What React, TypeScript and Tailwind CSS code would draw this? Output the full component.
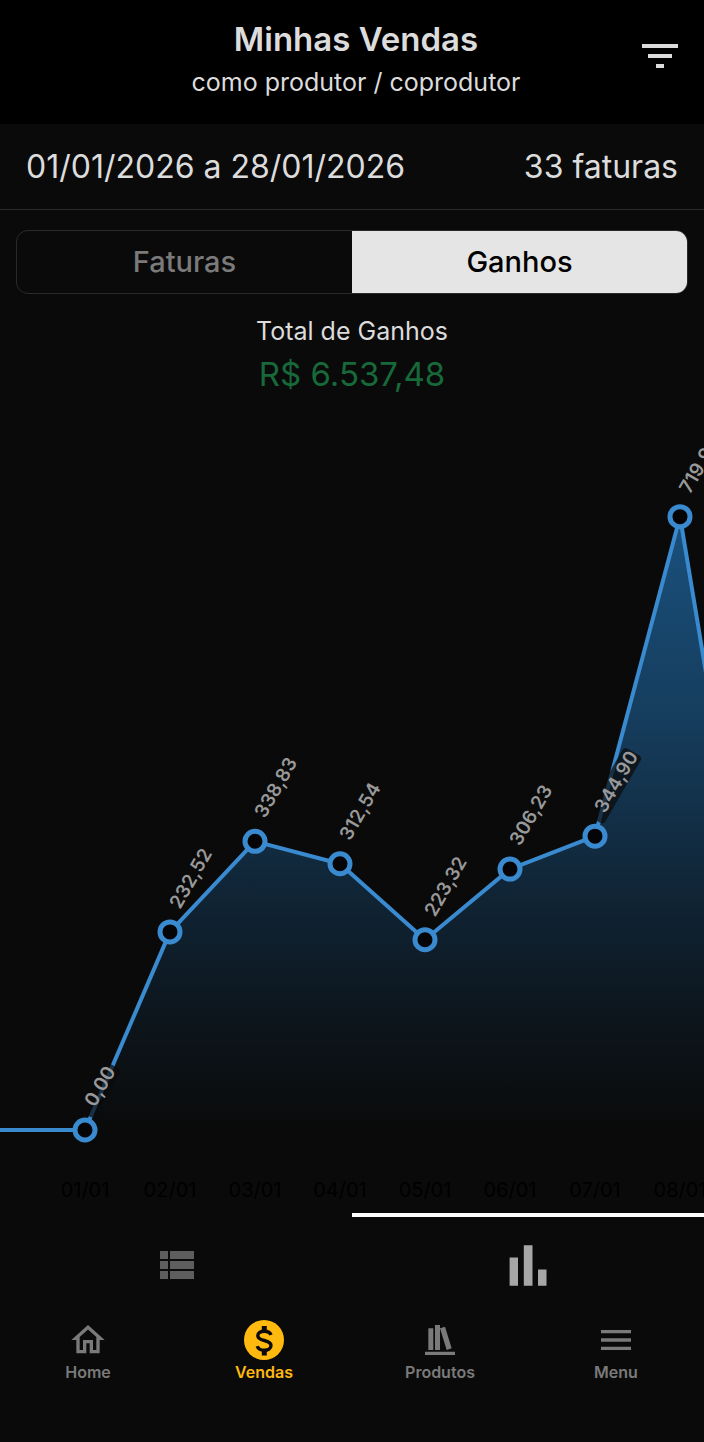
import { useState } from 'react';
import { MdFilterList, MdMenu } from 'react-icons/md';

interface Point {
  day: string;
  value: number;
}

const points: Point[] = [
  { day: '01/01', value: 0 },
  { day: '02/01', value: 232.52 },
  { day: '03/01', value: 338.83 },
  { day: '04/01', value: 312.54 },
  { day: '05/01', value: 223.32 },
  { day: '06/01', value: 306.23 },
  { day: '07/01', value: 344.9 },
  { day: '08/01', value: 719.9 },
  { day: '09/01', value: 120.4 },
];

const STEP = 85;
const BASE = 730;
const SCALE = 0.852;
const CHART_HEIGHT = 813;

const formatValue = (value: number) => value.toFixed(2).replace('.', ',');

function EarningsChart() {
  const coords = points.map((p, i) => ({ ...p, x: STEP * (i + 1), y: BASE - p.value * SCALE }));
  const width = STEP * (points.length + 1);
  const line = coords.map((c) => `L${c.x} ${c.y}`).join(' ');
  const lastX = coords[coords.length - 1].x;

  return (
    <div className="mt-1 overflow-x-auto overflow-y-hidden [scrollbar-width:none]">
      <svg width={width} height={CHART_HEIGHT} className="block max-w-none" role="img" aria-label="Ganhos por dia">
        <defs>
          <linearGradient id="area" x1="0" y1="117" x2="0" y2={BASE} gradientUnits="userSpaceOnUse">
            <stop offset="0" stopColor="#2688d8" stopOpacity="0.56" />
            <stop offset="0.35" stopColor="#2688d8" stopOpacity="0.39" />
            <stop offset="0.6" stopColor="#2688d8" stopOpacity="0.22" />
            <stop offset="0.8" stopColor="#2688d8" stopOpacity="0.1" />
            <stop offset="1" stopColor="#2688d8" stopOpacity="0" />
          </linearGradient>
        </defs>
        <path d={`M0 ${BASE} ${line} L${lastX} ${BASE} Z`} fill="url(#area)" />
        <path d={`M0 ${BASE} ${line}`} fill="none" stroke="#3a8ad0" strokeWidth="4" strokeLinejoin="round" />

        {coords.map((c) => {
          const label = formatValue(c.value);
          return (
            <g key={c.day}>
              <g transform={`translate(${c.x + 10} ${c.y - 22}) rotate(-60)`}>
                <rect x="-10" y="-17" width={label.length * 11 + 12} height="21" rx="4" fill="#0a0a0a" fillOpacity="0.7" />
                <text fontSize="19" fontWeight="600" fill="#999999">{label}</text>
              </g>
              <circle cx={c.x} cy={c.y} r="10" fill="#050507" stroke="#3a8ad0" strokeWidth="5" />
              <text x={c.x} y="797" fontSize="20" textAnchor="middle" fill="#000000">{c.day}</text>
            </g>
          );
        })}
      </svg>
    </div>
  );
}

function ListIcon() {
  return (
    <svg className="w-12 h-12" viewBox="0 0 24 24" fill="currentColor">
      <path d="M4 14h4v-4H4v4zm0 5h4v-4H4v4zM4 9h4V5H4v4zm5 5h12v-4H9v4zm0 5h12v-4H9v4zM9 5v4h12V5H9z" />
    </svg>
  );
}

function BarsIcon() {
  return (
    <svg className="w-12 h-12" viewBox="0 0 48 48" fill="currentColor">
      <path d="M5.6 16.5h8.4v28.2H5.6zM19.8 4.3h8.7v40.4h-8.7zM34 28.4h8.5v16.3H34z" />
    </svg>
  );
}

function HomeIcon() {
  return (
    <svg className="w-10 h-10" viewBox="0 0 24 24" fill="currentColor">
      <path d="M12 5.69l5 4.5V18h-2v-6H9v6H7v-7.81l5-4.5M12 3L2 12h3v8h6v-6h2v6h6v-8h3" />
    </svg>
  );
}

function MoneyIcon() {
  return (
    <svg className="w-10 h-10" viewBox="0 0 40 40" fill="none">
      <circle cx="20" cy="20" r="20" fill="currentColor" />
      <g stroke="#0a0a0a">
        <path
          strokeWidth="3.4"
          d="M27 15C26.2 12.6 23.6 11.3 20.3 11.3c-3.8 0-6.5 1.7-6.5 4.5 0 3 3.2 3.9 6.5 4.7 3.7.9 6.7 2 6.7 5.1 0 3-3 4.7-6.7 4.7-3.4 0-6.2-1.4-7-4.2"
        />
        <path strokeWidth="5" d="M20.3 6v4.8M20.3 30.8v4.8" />
      </g>
    </svg>
  );
}

function BooksIcon() {
  return (
    <svg className="w-10 h-10" viewBox="0 0 24 24" fill="currentColor">
      <path d="M9 3v15h3V3H9m3 2l4 13 3-1-4-13-3 1M5 5v13h3V5H5M3 19v2h18v-2H3z" />
    </svg>
  );
}

const navItems = [
  { label: 'Home', icon: <HomeIcon /> },
  { label: 'Vendas', icon: <MoneyIcon /> },
  { label: 'Produtos', icon: <BooksIcon /> },
  { label: 'Menu', icon: <MdMenu className="w-10 h-10" /> },
];

export default function App() {
  const [segment, setSegment] = useState('Ganhos');
  const [view, setView] = useState('chart');

  return (
    <div className="min-h-screen flex flex-col bg-[#0a0a0a] text-[#dcdcdc] font-['Inter',sans-serif]">
      {/* Header */}
      <header className="grid grid-cols-[56px_1fr_48px] items-start bg-black px-5 pt-4 pb-[22px]">
        <div className="col-start-2 text-center">
          <h1 className="text-[33px] leading-[46px] font-semibold">Minhas Vendas</h1>
          <p className="text-[25px] leading-10">como produtor / coprodutor</p>
        </div>
        <button type="button" aria-label="Filtrar" className="mt-4">
          <MdFilterList className="w-12 h-12" />
        </button>
      </header>

      {/* Period */}
      <div className="flex items-center justify-between h-[86px] px-[26px] border-b border-[#2a2a2a] text-[32px]">
        <span>01/01/2026 a 28/01/2026</span>
        <span>33 faturas</span>
      </div>

      {/* Segmented control */}
      <div className="grid grid-cols-2 h-16 mx-4 mt-5 rounded-xl border border-[#2a2a2a] overflow-hidden text-[29px]">
        {['Faturas', 'Ganhos'].map((name) => (
          <button
            key={name}
            type="button"
            aria-pressed={segment === name}
            onClick={() => setSegment(name)}
            className={segment === name ? 'bg-[#e5e5e5] text-black font-medium' : 'text-[#7a7a7a] font-medium'}
          >
            {name}
          </button>
        ))}
      </div>

      {/* Total */}
      <div className="pt-4 text-center">
        <p className="text-[25px] leading-[42px]">Total de Ganhos</p>
        <p className="text-[33px] leading-11 text-[#17693a]">R$ 6.537,48</p>
      </div>

      <EarningsChart />

      {/* View tabs */}
      <div className="grid grid-cols-2 h-[95px]">
        <button
          type="button"
          aria-label="Lista"
          onClick={() => setView('list')}
          className={`flex justify-center pt-6 border-t-4 ${view === 'list' ? 'border-white text-[#a6a6a6]' : 'border-transparent text-[#5e5e5e]'}`}
        >
          <ListIcon />
        </button>
        <button
          type="button"
          aria-label="Gráfico"
          onClick={() => setView('chart')}
          className={`flex justify-center pt-6 border-t-4 ${view === 'chart' ? 'border-white text-[#a6a6a6]' : 'border-transparent text-[#5e5e5e]'}`}
        >
          <BarsIcon />
        </button>
      </div>

      {/* Bottom navigation */}
      <nav className="grid grid-cols-4 pt-2 pb-12">
        {navItems.map((item) => (
          <a
            key={item.label}
            href="#"
            className={`flex flex-col items-center ${item.label === 'Vendas' ? 'text-[#ffb90f]' : 'text-[#7a7a7a]'}`}
          >
            <span className="flex h-12 items-center">{item.icon}</span>
            <span className="text-base leading-4 font-semibold">{item.label}</span>
          </a>
        ))}
      </nav>
    </div>
  );
}
